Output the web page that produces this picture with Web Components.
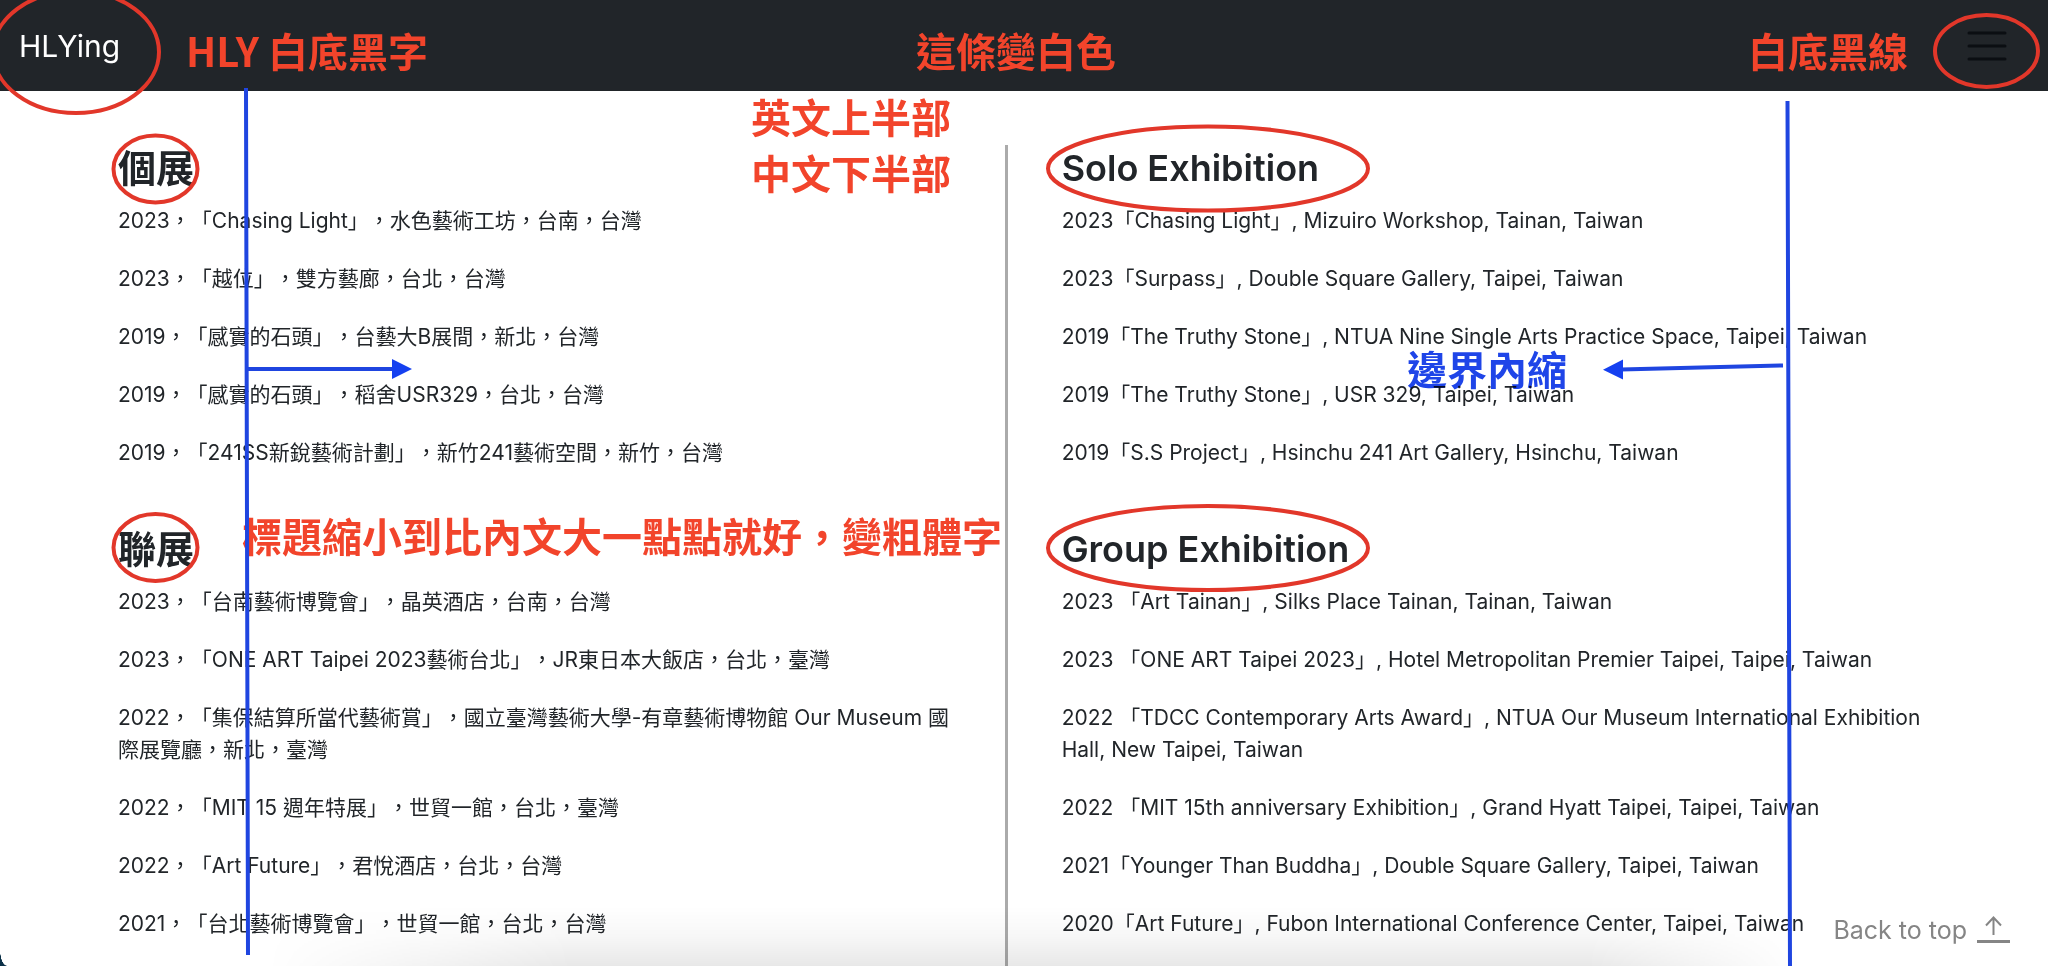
<!DOCTYPE html>
<html lang="zh-Hant">
<head>
<meta charset="utf-8">
<meta name="viewport" content="width=device-width, initial-scale=1">
<title>HLYing</title>
<style>
  body {
    margin: 0;
    background: #fff;
    color: #212529;
    font-family: Inter, "Noto Sans CJK TC", sans-serif;
    font-size: 21px;
    line-height: 32px;
    text-spacing-trim: space-all;
  }
</style>
</head>
<body>
<cv-page>
  <site-header slot="header" brand="HLYing"></site-header>
  <cv-column slot="zh">
    <exhibition-list heading="個展">
      <cv-entry>2023，「Chasing Light」，水色藝術工坊，台南，台灣</cv-entry>
      <cv-entry>2023，「越位」，雙方藝廊，台北，台灣</cv-entry>
      <cv-entry>2019，「感實的石頭」，台藝大B展間，新北，台灣</cv-entry>
      <cv-entry>2019，「感實的石頭」，稻舍USR329，台北，台灣</cv-entry>
      <cv-entry>2019，「241SS新銳藝術計劃」，新竹241藝術空間，新竹，台灣</cv-entry>
    </exhibition-list>
    <exhibition-list heading="聯展">
      <cv-entry>2023，「台南藝術博覽會」，晶英酒店，台南，台灣</cv-entry>
      <cv-entry>2023，「ONE ART Taipei 2023藝術台北」，JR東日本大飯店，台北，臺灣</cv-entry>
      <cv-entry>2022，「集保結算所當代藝術賞」，國立臺灣藝術大學-有章藝術博物館 Our Museum 國際展覽廳，新北，臺灣</cv-entry>
      <cv-entry>2022，「MIT 15 週年特展」，世貿一館，台北，臺灣</cv-entry>
      <cv-entry>2022，「Art Future」，君悅酒店，台北，台灣</cv-entry>
      <cv-entry>2021，「台北藝術博覽會」，世貿一館，台北，台灣</cv-entry>
    </exhibition-list>
  </cv-column>
  <cv-column slot="en" lang="en">
    <exhibition-list heading="Solo Exhibition">
      <cv-entry>2023「Chasing Light」, Mizuiro Workshop, Tainan, Taiwan</cv-entry>
      <cv-entry>2023「Surpass」, Double Square Gallery, Taipei, Taiwan</cv-entry>
      <cv-entry>2019「The Truthy Stone」, NTUA Nine Single Arts Practice Space, Taipei, Taiwan</cv-entry>
      <cv-entry>2019「The Truthy Stone」, USR 329, Taipei, Taiwan</cv-entry>
      <cv-entry>2019「S.S Project」, Hsinchu 241 Art Gallery, Hsinchu, Taiwan</cv-entry>
    </exhibition-list>
    <exhibition-list heading="Group Exhibition">
      <cv-entry>2023 「Art Tainan」, Silks Place Tainan, Tainan, Taiwan</cv-entry>
      <cv-entry>2023 「ONE ART Taipei 2023」, Hotel Metropolitan Premier Taipei, Taipei, Taiwan</cv-entry>
      <cv-entry>2022 「TDCC Contemporary Arts Award」, NTUA Our Museum International Exhibition Hall, New Taipei, Taiwan</cv-entry>
      <cv-entry>2022 「MIT 15th anniversary Exhibition」, Grand Hyatt Taipei, Taipei, Taiwan</cv-entry>
      <cv-entry>2021「Younger Than Buddha」, Double Square Gallery, Taipei, Taiwan</cv-entry>
      <cv-entry>2020「Art Future」, Fubon International Conference Center, Taipei, Taiwan</cv-entry>
    </exhibition-list>
  </cv-column>
  <back-to-top slot="overlay"></back-to-top>
  <review-marks slot="overlay">
    <review-note x="186" y="25">HLY 白底黑字</review-note>
    <review-note x="916" y="25">這條變白色</review-note>
    <review-note x="1748" y="25">白底黑線</review-note>
    <review-note x="751" y="91">英文上半部</review-note>
    <review-note x="751" y="147">中文下半部</review-note>
    <review-note x="242" y="510">標題縮小到比內文大一點點就好，變粗體字</review-note>
    <review-note x="1407" y="343" tone="blue">邊界內縮</review-note>
  </review-marks>
</cv-page>

<script>
class BaseElement extends HTMLElement {
  constructor() {
    super();
    this.attachShadow({ mode: "open" }).innerHTML = this.constructor.markup;
  }
}

class CvPage extends BaseElement {
  static markup = `
    <style>
      :host { display: flex; flex-direction: column; position: relative; min-height: 100vh; overflow: hidden; }
      main {
        flex: 1; display: grid; grid-template-columns: 33fr 35fr;
        padding: 54px 103px 0 118px;
      }
      .zh { --heading-size: 38px; padding: 0 48px 26px 0; }
      .en { --heading-size: 36px; padding: 0 0 26px 54px; border-left: 3px solid #ababab; }
      .shade {
        position: absolute; left: 13%; right: 12%; bottom: 0; height: 60px; pointer-events: none;
        background: linear-gradient(to top, rgba(0,0,0,.09), rgba(0,0,0,.03) 50%, transparent);
        -webkit-mask-image: linear-gradient(to right, transparent, #000 20%, #000 86%, transparent);
        mask-image: linear-gradient(to right, transparent, #000 20%, #000 86%, transparent);
      }
      .corner {
        position: absolute; left: 0; bottom: 0; width: 7px; height: 16px;
        background: radial-gradient(ellipse 7px 16px at 100% 0, transparent 96%, #0b3047 100%);
      }
    </style>
    <slot name="header"></slot>
    <main>
      <div class="zh"><slot name="zh"></slot></div>
      <div class="en"><slot name="en"></slot></div>
    </main>
    <div class="shade"></div>
    <div class="corner"></div>
    <slot name="overlay"></slot>`;
}

class SiteHeader extends BaseElement {
  static markup = `
    <style>
      :host { display: block; background: #212529; }
      nav { display: flex; align-items: center; justify-content: space-between; height: 91px; padding: 0 32px 0 19px; box-sizing: border-box; }
      a { color: #fff; font-size: 30px; line-height: 40px; text-decoration: none; }
      button { display: block; padding: 0 9px; border: 0; background: none; }
      svg { display: block; }
    </style>
    <nav>
      <a href="#"></a>
      <button type="button" aria-label="Menu">
        <svg width="40" height="40" viewBox="0 0 40 40" stroke="#0b0e12" stroke-width="3" stroke-linecap="round"><path d="M2 7h36M2 20h36M2 33h36"/></svg>
      </button>
    </nav>`;
  connectedCallback() {
    this.shadowRoot.querySelector("a").textContent = this.getAttribute("brand");
  }
}

class CvColumn extends BaseElement {
  static markup = `
    <style>:host { display: flex; flex-direction: column; gap: 57px; }</style>
    <slot></slot>`;
}

class ExhibitionList extends BaseElement {
  static markup = `
    <style>
      :host { display: block; }
      h2 { margin: 0 0 14px; font-size: var(--heading-size, 36px); line-height: 46px; font-weight: 600; }
      div { display: flex; flex-direction: column; gap: 26px; }
    </style>
    <h2></h2>
    <div role="list"><slot></slot></div>`;
  connectedCallback() {
    this.shadowRoot.querySelector("h2").textContent = this.getAttribute("heading");
  }
}

class CvEntry extends BaseElement {
  static markup = `<style>:host { display: block; }</style><slot></slot>`;
  connectedCallback() { this.setAttribute("role", "listitem"); }
}

class BackToTop extends BaseElement {
  static markup = `
    <style>
      :host { position: absolute; right: 38px; bottom: 20px; }
      a { display: flex; align-items: center; gap: 10px; color: #858585; font-size: 25px; line-height: 32px; text-decoration: none; }
      svg { display: block; }
    </style>
    <a href="#">Back to top
      <svg width="33" height="32" viewBox="0 0 33 32" fill="none" stroke="currentColor" stroke-width="2"><path d="M16.500 21V4M9 11.500l7.500-8 7.500 8"/><path d="M0 27.500h33" stroke-width="3"/></svg>
    </a>`;
}

class ReviewMarks extends BaseElement {
  static markup = `
    <style>
      :host { position: absolute; inset: 0; pointer-events: none; }
      svg { position: absolute; inset: 0; width: 100%; height: 100%; }
    </style>
    <slot></slot>
    <svg fill="none" stroke-width="4" aria-hidden="true">
      <g stroke="#e2372a">
        <ellipse cx="76" cy="52" rx="83" ry="61"/>
        <ellipse cx="155.500" cy="169" rx="42" ry="33.500"/>
        <ellipse cx="155.500" cy="547.500" rx="42" ry="33.500"/>
        <ellipse cx="1208" cy="168.500" rx="160" ry="42"/>
        <ellipse cx="1208" cy="548" rx="160" ry="42"/>
        <ellipse cx="1986.500" cy="51" rx="51.500" ry="36"/>
      </g>
      <g stroke="#1f45e0">
        <path d="M246 88L248 955M1787.500 101L1790 966M248 369H394M1783 365.500L1621 369.500"/>
        <path d="M392 359L412 369L392 379ZM1623 359.500L1603 369.800L1623 379.500Z" fill="#1540f0" stroke="none"/>
      </g>
    </svg>`;
}

class ReviewNote extends BaseElement {
  static markup = `
    <style>
      :host { position: absolute; white-space: nowrap; color: #f2442b; font: 700 40px/50px "Noto Sans CJK TC", sans-serif; }
      :host([tone="blue"]) { color: #1f45e8; mix-blend-mode: multiply; }
    </style>
    <slot></slot>`;
  connectedCallback() {
    this.style.left = this.getAttribute("x") + "px";
    this.style.top = this.getAttribute("y") + "px";
  }
}

customElements.define("cv-page", CvPage);
customElements.define("site-header", SiteHeader);
customElements.define("cv-column", CvColumn);
customElements.define("exhibition-list", ExhibitionList);
customElements.define("cv-entry", CvEntry);
customElements.define("back-to-top", BackToTop);
customElements.define("review-marks", ReviewMarks);
customElements.define("review-note", ReviewNote);
</script>
</body>
</html>
